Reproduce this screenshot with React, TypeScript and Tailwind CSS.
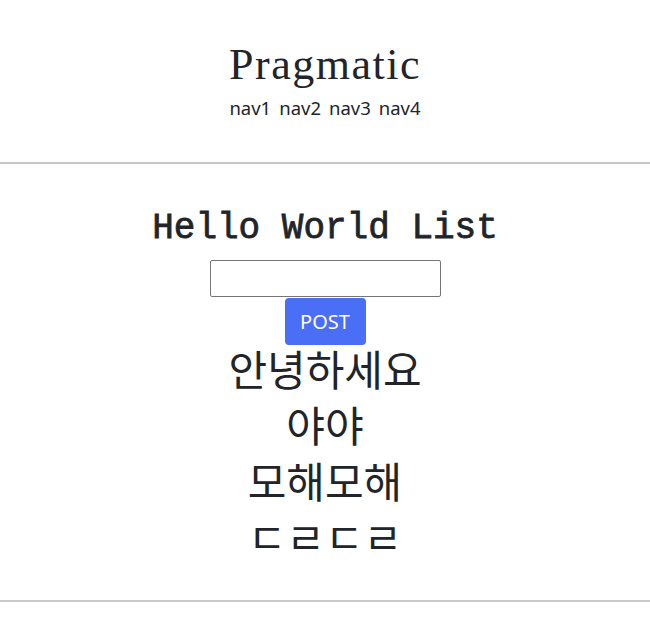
import { useState } from 'react';

const items = ['안녕하세요', '야야', '모해모해', 'ㄷㄹㄷㄹ'];

export default function App() {
  const [text, setText] = useState('');

  return (
    <div className="min-h-screen bg-white text-[#212529] text-center font-['Noto_Sans','Noto_Sans_CJK_KR',sans-serif]">
      {/* Header */}
      <header className="pt-[37px] pb-[42px]">
        <h1 className="text-[44px] leading-[56px] tracking-[1.5px] font-['Liberation_Serif',serif] text-[#212529]">Pragmatic</h1>
        <nav className="flex justify-center gap-[8px] text-[18.5px] leading-[24px] mt-[3px]">
          <span>nav1</span>
          <span>nav2</span>
          <span>nav3</span>
          <span>nav4</span>
        </nav>
      </header>

      <div className="h-[2px] bg-[#c8c8c8]" />

      {/* Content */}
      <main className="pt-[40px] pb-[36px] flex flex-col items-center">
        <h2 className="text-[36px] leading-[50px] font-['Liberation_Mono',monospace] [-webkit-text-stroke:0.8px_#212529] mb-[6px]">Hello World List</h2>
        <input
          type="text"
          value={text}
          onChange={(e) => setText(e.target.value)}
          className="w-[231px] h-[37px] border border-[#767676] rounded-[2px] px-2 text-base focus:outline-none"
        />
        <button className="w-[81px] h-[47px] bg-[#4a6ef5] text-white rounded-[4px] text-[20px] mt-[1px]">POST</button>
        <ul className="text-[42px] leading-[56px] -mt-[5px] font-['Noto_Sans_CJK_KR',sans-serif]">
          {items.map((item) => (
            <li key={item}>{item}</li>
          ))}
        </ul>
      </main>

      <div className="h-[2px] bg-[#c8c8c8]" />
    </div>
  );
}
